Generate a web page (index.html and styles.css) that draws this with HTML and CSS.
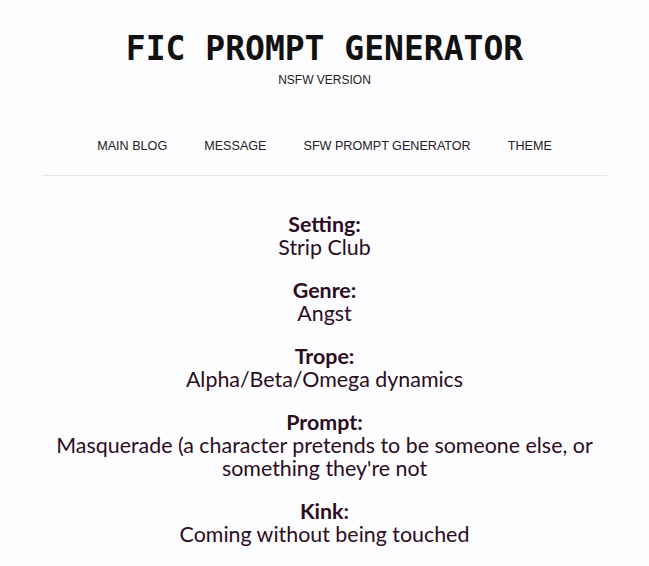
FILE: index.html
```html
<!DOCTYPE html>
<html lang="en">
<head>
    <meta charset="UTF-8">
    <meta name="viewport" content="width=device-width, initial-scale=1.0">
    <title>Fic Prompt Generator</title>
    <link rel="stylesheet" href="styles.css">
</head>
<body>

<div class="header">
    <h1>FIC PROMPT GENERATOR</h1>
    <div class="subtitle">NSFW VERSION</div>
</div>

<nav class="nav">
    <a href="#">MAIN BLOG</a>
    <a href="#">MESSAGE</a>
    <a href="#">SFW PROMPT GENERATOR</a>
    <a href="#">THEME</a>
</nav>

<div class="prompt">
    <p><b>Setting:</b><br>Strip Club</p>
    <p><b>Genre:</b><br>Angst</p>
    <p><b>Trope:</b><br>Alpha/Beta/Omega dynamics</p>
    <p><b>Prompt:</b><br>Masquerade (a character pretends to be someone else, or something they're not</p>
    <p><b>Kink:</b><br>Coming without being touched</p>
</div>

</body>
</html>
```

FILE: styles.css
```css
* {
    margin: 0;
    padding: 0;
    box-sizing: border-box;
}
body {
    background: #fdfcfe;
    font-family: 'Liberation Sans', Arial, sans-serif;
    color: #2b0d1e;
}
.header {
    text-align: center;
    padding-top: 29px;
}
h1 {
    font-family: 'DejaVu Sans Mono', monospace;
    font-size: 33px;
    font-weight: bold;
    color: #111;
    line-height: 40px;
}
.subtitle {
    font-size: 12px;
    color: #222;
    margin-top: 4px;
}
.nav {
    display: flex;
    justify-content: center;
    gap: 37px;
    margin: 0 42px;
    padding: 52px 0 22px;
    border-bottom: 1px solid #e8e6ea;
}
.nav a {
    font-size: 12.6px;
    color: #222;
    text-decoration: none;
}
.prompt {
    text-align: center;
    font-family: Lato, 'Open Sans', sans-serif;
    font-size: 21.4px;
    line-height: 23px;
    margin: 0 42px;
    padding-top: 37px;
}
.prompt p {
    margin-bottom: 20px;
}
.prompt b {
    font-weight: bold;
}
```
